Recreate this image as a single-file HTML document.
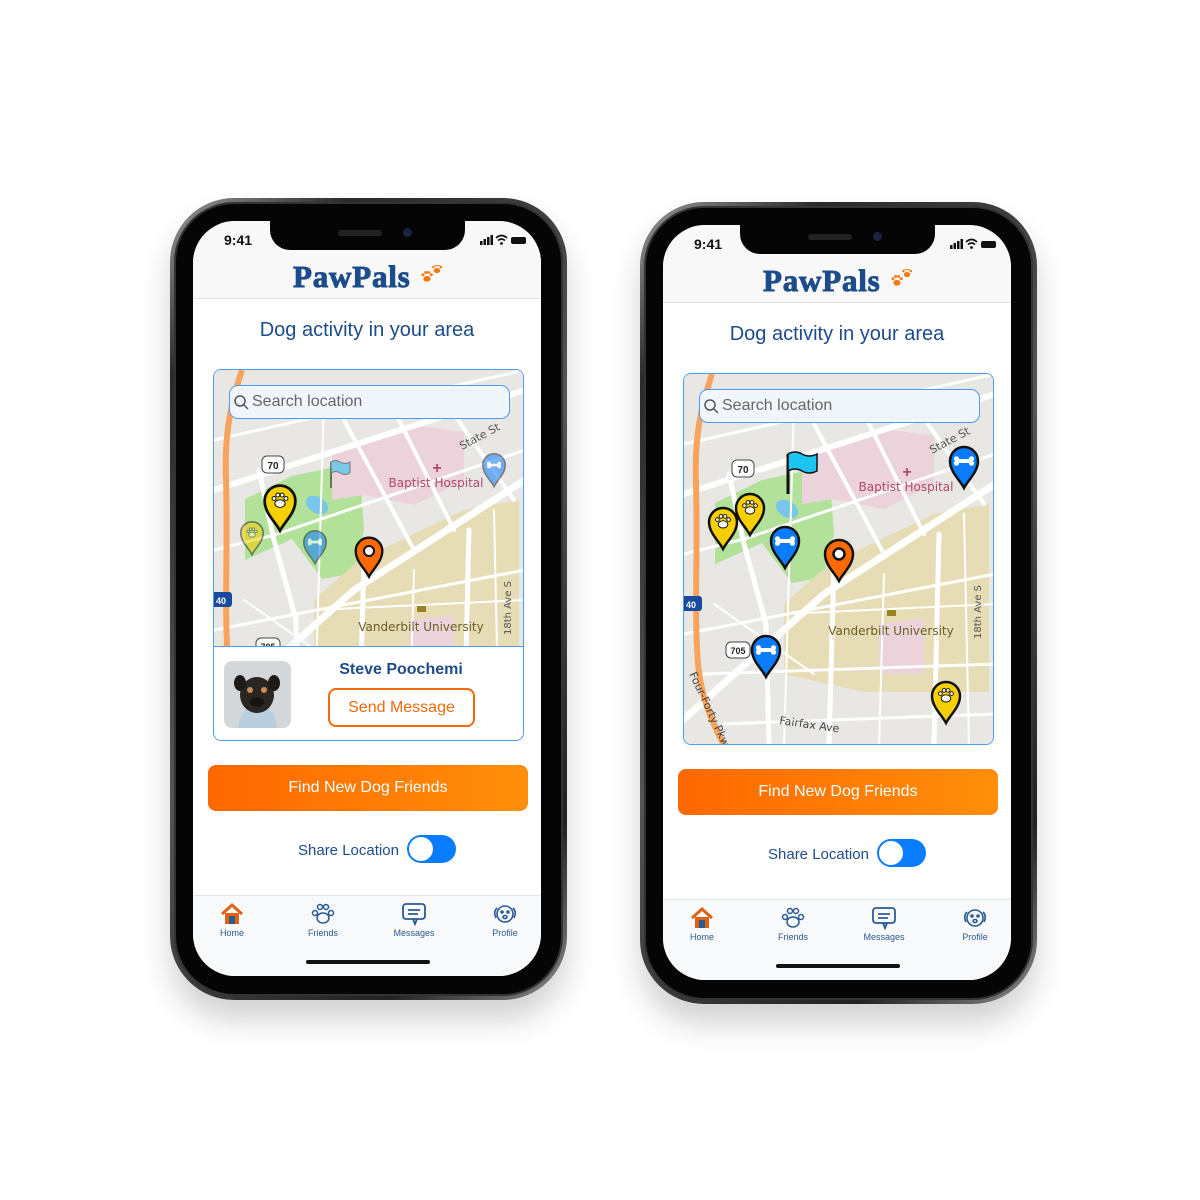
<!DOCTYPE html>
<html><head><meta charset="utf-8"><style>
*{margin:0;padding:0;box-sizing:border-box}
body{width:1200px;height:1200px;background:#fff;position:relative;overflow:hidden;font-family:"Liberation Sans",sans-serif}
.phone{position:absolute;width:397px;height:802px;border-radius:64px;background:linear-gradient(135deg,#9a9a9a,#2a2a2a 15%,#555 50%,#222 85%,#8a8a8a);box-shadow:0 20px 30px rgba(0,0,0,.18);padding:4px}
.phone .inner{width:100%;height:100%;border-radius:60px;background:#050505;position:relative;border:2px solid #333}
.screen{position:absolute;left:17px;top:17px;width:348px;height:755px;border-radius:42px;background:#fff;overflow:hidden}
.notch{position:absolute;left:77px;top:0;width:195px;height:29px;background:#050505;border-radius:0 0 20px 20px}
.notch:before{content:"";position:absolute;left:68px;top:9px;width:44px;height:6px;border-radius:3px;background:#222}
.notch:after{content:"";position:absolute;left:133px;top:7px;width:9px;height:9px;border-radius:50%;background:#1a2540}
.time{position:absolute;left:31px;top:11px;font-size:14px;color:#111;font-weight:bold}
.stat{position:absolute;right:13px;top:13px}
.header{position:absolute;left:0;top:0;width:348px;height:78px;background:#f8f8f8;border-bottom:1px solid #e2e2e2}
.logo{position:absolute;left:100px;top:38px;font-family:"Liberation Serif",serif;font-weight:bold;font-size:31px;color:#1d4c8a;letter-spacing:.8px;-webkit-text-stroke:.9px #1d4c8a}
.paws{position:absolute;left:227px;top:44px}
.title{position:absolute;top:98px;width:100%;text-align:center;font-size:20px;color:#1d4c8a}
.mapbox{position:absolute;left:20px;top:148px;width:311px;height:372px;border:1px solid #4a9cf5;border-radius:8px;overflow:hidden;background:#fff}
.map{position:absolute;left:0;top:0;width:311px;height:372px}
.search{position:absolute;left:15px;top:15px;width:281px;height:34px;border:1px solid #4a9cf5;border-radius:9px;background:#f1f6fd;font-size:16px;color:#666;padding:7px 0 0 22px}
.btn{position:absolute;left:15px;top:544px;width:320px;height:46px;border-radius:8px;background:linear-gradient(90deg,#ff6800,#ff8f0a);color:#fff;font-size:16px;text-align:center;line-height:46px}
.share{position:absolute;top:616px;left:105px;font-size:15px;color:#1d4c8a;line-height:28px}
.tog{position:absolute;top:614px;left:214px;width:49px;height:28px;border-radius:14px;background:#0a7cff}
.tog:after{content:"";position:absolute;left:2px;top:2px;width:24px;height:24px;border-radius:50%;background:#fff}
.nav{position:absolute;left:0;top:674px;width:348px;height:81px;background:#f8f9fa;border-top:1px solid #e4e4e4}
.nav div{position:absolute;top:6px;width:80px;text-align:center;font-size:9px;color:#2a5a94}
.nav svg{display:block;margin:0 auto 2px}
.hbar{position:absolute;left:113px;top:739px;width:124px;height:4px;border-radius:2px;background:#111}
</style></head><body>

<svg width="0" height="0" style="position:absolute">
<defs>
<path id="pin" d="M0,27 C-4,19 -14,11 -14,0 A14,14 0 1,1 14,0 C14,11 4,19 0,27Z"/>
<g id="paw"><ellipse cx="0" cy="3" rx="6" ry="4.5" fill="#fff" stroke="#111" stroke-width="1.2"/><circle cx="-7" cy="-3" r="2.3" fill="#fff" stroke="#111" stroke-width="1.2"/><circle cx="-2.5" cy="-7" r="2.3" fill="#fff" stroke="#111" stroke-width="1.2"/><circle cx="2.5" cy="-7" r="2.3" fill="#fff" stroke="#111" stroke-width="1.2"/><circle cx="7" cy="-3" r="2.3" fill="#fff" stroke="#111" stroke-width="1.2"/></g>
<g id="bone"><rect x="-7" y="-2" width="14" height="4" fill="#fff"/><circle cx="-7.5" cy="-2.2" r="2.6" fill="#fff"/><circle cx="-7.5" cy="2.2" r="2.6" fill="#fff"/><circle cx="7.5" cy="-2.2" r="2.6" fill="#fff"/><circle cx="7.5" cy="2.2" r="2.6" fill="#fff"/></g>
<g id="opaw"><ellipse cx="0" cy="2" rx="4" ry="3.2"/><circle cx="-4.5" cy="-2.5" r="1.6"/><circle cx="-1.5" cy="-5" r="1.6"/><circle cx="1.8" cy="-5" r="1.6"/><circle cx="4.8" cy="-2.5" r="1.6"/></g>
<g id="base">
<rect width="311" height="372" fill="#e9e7e3"/>
<polygon points="31,129 78,106 145,92 150,160 141,203 108,209 78,169 31,190" fill="#b2e19a"/>
<polygon points="118,83 200,55 250,62 250,110 200,135 150,125 118,130" fill="#ecd2da"/>
<polygon points="145,190 250,140 305,130 305,318 180,318 100,300 100,230" fill="#e6dcb5"/>
<polygon points="195,250 240,245 240,300 195,300" fill="#ecd2da"/>
<ellipse cx="103" cy="135" rx="12" ry="8" fill="#79c6ec" transform="rotate(30 103 135)"/>
<g stroke="#fff" fill="none" stroke-linecap="round">
<path d="M0,120 L311,20" stroke-width="6"/>
<path d="M0,345 L140,220 L311,110" stroke-width="7"/>
<path d="M45,100 L60,170 L82,250 L85,372" stroke-width="5"/>
<path d="M150,190 L145,372" stroke-width="5"/>
<path d="M255,160 L250,372" stroke-width="5"/>
<path d="M130,50 L200,180" stroke-width="4"/>
<path d="M180,40 L240,160" stroke-width="4"/>
<path d="M230,30 L300,130" stroke-width="4"/>
<path d="M0,70 L311,0" stroke-width="3"/>
<path d="M0,180 L60,165 L311,80" stroke-width="3"/>
<path d="M0,260 L311,200" stroke-width="3"/>
<path d="M20,300 L311,290" stroke-width="3"/>
<path d="M40,350 L311,340" stroke-width="3"/>
<path d="M110,30 L100,372" stroke-width="2"/>
<path d="M200,200 L195,372" stroke-width="2"/>
<path d="M280,140 L285,372" stroke-width="2"/>
<path d="M30,230 L130,300" stroke-width="2"/>
<path d="M100,240 L311,230" stroke-width="2"/>
</g>
<path d="M28,0 C18,30 10,60 12,110 C14,180 10,240 14,290 C18,330 30,350 40,372" stroke="#f9a35c" stroke-width="6" fill="none"/>
<text x="240" y="72" font-size="11" fill="#555" transform="rotate(-28 260 60)" font-family="DejaVu Sans">State St</text>
<text x="222" y="117" font-size="12" fill="#b14a6e" text-anchor="middle" font-family="DejaVu Sans">Baptist Hospital</text>
<text x="223" y="103" font-size="16" fill="#b14a6e" text-anchor="middle" font-weight="bold">+</text>
<text x="207" y="261" font-size="12" fill="#6c5e25" text-anchor="middle" font-family="DejaVu Sans">Vanderbilt University</text>
<rect x="203" y="236" width="9" height="6" fill="#9a8420"/>
<text x="0" y="0" font-size="10" fill="#555" font-family="DejaVu Sans" transform="translate(297,265) rotate(-90)">18th Ave S</text>
<text x="95" y="350" font-size="11" fill="#444" font-family="DejaVu Sans" transform="rotate(8 95 350)">Fairfax Ave</text>
<text x="0" y="0" font-size="11" fill="#444" font-family="DejaVu Sans" transform="translate(5,300) rotate(65)">Four-Forty Pkwy</text>
<rect x="48" y="86" width="22" height="17" rx="5" fill="#fff" stroke="#444"/><text x="59" y="99" font-size="10" text-anchor="middle" font-weight="bold" fill="#222">70</text>
<rect x="42" y="268" width="24" height="16" rx="5" fill="#fff" stroke="#444"/><text x="54" y="280" font-size="9" text-anchor="middle" font-weight="bold" fill="#222">705</text>
<rect x="-4" y="222" width="22" height="15" rx="3" fill="#1a4a9e"/><text x="7" y="234" font-size="9" text-anchor="middle" font-weight="bold" fill="#fff">40</text>
</g>
<g id="stat"><rect x="0" y="7" width="2.5" height="4" fill="#111"/><rect x="3.5" y="5" width="2.5" height="6" fill="#111"/><rect x="7" y="3" width="2.5" height="8" fill="#111"/><rect x="10.5" y="1" width="2.5" height="10" fill="#111"/><path d="M16,4 Q21.5,-1 27,4 M18,6.5 Q21.5,3.5 25,6.5" stroke="#111" stroke-width="1.6" fill="none"/><circle cx="21.5" cy="9.5" r="1.4" fill="#111"/><rect x="31" y="3" width="15" height="7" rx="2" fill="#111"/></g>
<g id="logopaws" fill="#f27a10"><use href="#opaw" transform="translate(7,12) scale(.9)"/><use href="#opaw" transform="translate(17,4) scale(.8)"/></g>
</defs></svg>

<!-- LEFT PHONE -->
<div class="phone" style="left:170px;top:198px"><div class="inner"><div class="screen">
<div class="header"></div>
<div class="logo">PawPals</div>
<svg class="paws" width="26" height="20"><use href="#logopaws"/></svg>
<div class="notch"></div>
<div class="time">9:41</div>
<svg class="stat" width="48" height="12"><use href="#stat"/></svg>
<div class="title">Dog activity in your area</div>
<div class="mapbox">
<svg class="map" viewBox="0 0 311 276" style="height:276px"><use href="#base"/>
<g opacity=".55"><g transform="translate(38,163)"><use href="#pin" fill="#f5cf00" stroke="#222" stroke-width="2" transform="scale(.8)"/><use href="#paw" transform="scale(.55)"/></g>
<g transform="translate(101,172)"><use href="#pin" fill="#0a7cff" stroke="#222" stroke-width="2" transform="scale(.8)"/><use href="#bone" transform="scale(.7)"/></g>
<g transform="translate(280,95)"><use href="#pin" fill="#0a7cff" stroke="#222" stroke-width="2" transform="scale(.8)"/><use href="#bone" transform="scale(.7)"/></g>
<g transform="translate(117,100)"><path d="M0,18 V-8" stroke="#222" stroke-width="2"/><path d="M0,-8 Q5,-11 9,-8 Q14,-5 19,-8 V3 Q14,6 9,3 Q5,0 0,3Z" fill="#1cc4f0" stroke="#222"/></g></g>
<g transform="translate(66,131)"><use href="#pin" fill="#f5cf00" stroke="#111" stroke-width="2.5" transform="scale(1.1)"/><use href="#paw" transform="scale(.85)"/></g>
<g transform="translate(155,181)"><use href="#pin" fill="#ff6a00" stroke="#111" stroke-width="2.5" transform="scale(.95)"/><circle r="5" fill="#fff" stroke="#111" stroke-width="2"/></g>
</svg>
<div class="search"><svg style="position:absolute;left:4px;top:9px" width="15" height="15"><circle cx="6" cy="6" r="5" stroke="#555" stroke-width="1.5" fill="none"/><path d="M10,10 L14,14" stroke="#555" stroke-width="1.5"/></svg>Search location</div>
<div style="position:absolute;left:0;top:276px;width:311px;height:96px;border-top:1px solid #4a9cf5;background:#fff">
<svg style="position:absolute;left:10px;top:14px" width="67" height="67"><rect width="67" height="67" rx="8" fill="#d4d7da"/><path d="M14,67 Q16,50 26,46 L41,46 Q51,50 53,67Z" fill="#b9cfe0"/><ellipse cx="33" cy="34" rx="17" ry="18" fill="#2b2622"/><ellipse cx="16" cy="22" rx="6" ry="8" fill="#1e1a17"/><ellipse cx="50" cy="22" rx="6" ry="8" fill="#1e1a17"/><circle cx="26" cy="29" r="3" fill="#c98c5a"/><circle cx="40" cy="29" r="3" fill="#c98c5a"/><ellipse cx="33" cy="41" rx="7" ry="5" fill="#161311"/></svg>
<div style="position:absolute;left:100px;top:14px;width:174px;text-align:center;font-size:16px;font-weight:bold;color:#1d4c8a">Steve Poochemi</div>
<div style="position:absolute;left:114px;top:41px;width:147px;height:39px;border:2px solid #f26a0c;border-radius:8px;text-align:center;line-height:35px;color:#f26a0c;font-size:16px">Send Message</div>
</div>
</div>
<div class="btn">Find New Dog Friends</div>
<div class="share">Share Location</div><div class="tog"></div>
<div class="nav">
<div style="left:-1px"><svg width="26" height="24"><path d="M3,12 L13,3 L23,12" stroke="#e0620e" stroke-width="3" fill="none"/><rect x="6" y="11" width="14" height="11" fill="#e0620e"/><rect x="10" y="14" width="6" height="8" fill="#2a5a94"/></svg>Home</div>
<div style="left:90px"><svg width="26" height="24" fill="none" stroke="#2a5a94" stroke-width="1.5"><ellipse cx="13" cy="16" rx="6" ry="5"/><circle cx="5" cy="11" r="2.5"/><circle cx="10" cy="5" r="2.5"/><circle cx="16" cy="5" r="2.5"/><circle cx="21" cy="11" r="2.5"/></svg>Friends</div>
<div style="left:181px"><svg width="26" height="24" fill="none" stroke="#2a5a94" stroke-width="1.8"><rect x="2" y="2" width="22" height="15" rx="3"/><path d="M7,8 H19 M7,12 H17 M12,17 L14,22 L16,17"/></svg>Messages</div>
<div style="left:272px"><svg width="26" height="24" fill="none" stroke="#2a5a94" stroke-width="1.6"><circle cx="13" cy="12" r="8"/><path d="M5,6 Q1,10 4,16 M21,6 Q25,10 22,16"/><circle cx="10" cy="10" r="1" fill="#2a5a94"/><circle cx="16" cy="10" r="1" fill="#2a5a94"/><ellipse cx="13" cy="15" rx="2" ry="1.5"/></svg>Profile</div>
</div>
<div class="hbar"></div>
</div></div></div>

<!-- RIGHT PHONE -->
<div class="phone" style="left:640px;top:202px"><div class="inner"><div class="screen">
<div class="header"></div>
<div class="logo">PawPals</div>
<svg class="paws" width="26" height="20"><use href="#logopaws"/></svg>
<div class="notch"></div>
<div class="time">9:41</div>
<svg class="stat" width="48" height="12"><use href="#stat"/></svg>
<div class="title">Dog activity in your area</div>
<div class="mapbox">
<svg class="map" viewBox="0 0 311 372"><use href="#base"/>
<g transform="translate(104,80)"><path d="M0,40 V0" stroke="#111" stroke-width="3"/><path d="M0,0 Q7,-4 14,0 Q21,4 29,0 V17 Q21,21 14,17 Q7,13 0,17Z" fill="#1cc4f0" stroke="#111" stroke-width="1.5"/></g>
<g transform="translate(39,148)"><use href="#pin" fill="#f5cf00" stroke="#111" stroke-width="2.5"/><use href="#paw" transform="scale(.8)"/></g>
<g transform="translate(66,134)"><use href="#pin" fill="#f5cf00" stroke="#111" stroke-width="2.5"/><use href="#paw" transform="scale(.8)"/></g>
<g transform="translate(101,167)"><use href="#pin" fill="#0a7cff" stroke="#111" stroke-width="2.5"/><use href="#bone"/></g>
<g transform="translate(155,180)"><use href="#pin" fill="#ff6a00" stroke="#111" stroke-width="2.5"/><circle r="5.5" fill="#fff" stroke="#111" stroke-width="2.5"/></g>
<g transform="translate(280,87)"><use href="#pin" fill="#0a7cff" stroke="#111" stroke-width="2.5"/><use href="#bone"/></g>
<g transform="translate(82,276)"><use href="#pin" fill="#0a7cff" stroke="#111" stroke-width="2.5"/><use href="#bone"/></g>
<g transform="translate(262,322)"><use href="#pin" fill="#f5cf00" stroke="#111" stroke-width="2.5"/><use href="#paw" transform="scale(.8)"/></g>
</svg>
<div class="search"><svg style="position:absolute;left:4px;top:9px" width="15" height="15"><circle cx="6" cy="6" r="5" stroke="#555" stroke-width="1.5" fill="none"/><path d="M10,10 L14,14" stroke="#555" stroke-width="1.5"/></svg>Search location</div>
</div>
<div class="btn">Find New Dog Friends</div>
<div class="share">Share Location</div><div class="tog"></div>
<div class="nav">
<div style="left:-1px"><svg width="26" height="24"><path d="M3,12 L13,3 L23,12" stroke="#e0620e" stroke-width="3" fill="none"/><rect x="6" y="11" width="14" height="11" fill="#e0620e"/><rect x="10" y="14" width="6" height="8" fill="#2a5a94"/></svg>Home</div>
<div style="left:90px"><svg width="26" height="24" fill="none" stroke="#2a5a94" stroke-width="1.5"><ellipse cx="13" cy="16" rx="6" ry="5"/><circle cx="5" cy="11" r="2.5"/><circle cx="10" cy="5" r="2.5"/><circle cx="16" cy="5" r="2.5"/><circle cx="21" cy="11" r="2.5"/></svg>Friends</div>
<div style="left:181px"><svg width="26" height="24" fill="none" stroke="#2a5a94" stroke-width="1.8"><rect x="2" y="2" width="22" height="15" rx="3"/><path d="M7,8 H19 M7,12 H17 M12,17 L14,22 L16,17"/></svg>Messages</div>
<div style="left:272px"><svg width="26" height="24" fill="none" stroke="#2a5a94" stroke-width="1.6"><circle cx="13" cy="12" r="8"/><path d="M5,6 Q1,10 4,16 M21,6 Q25,10 22,16"/><circle cx="10" cy="10" r="1" fill="#2a5a94"/><circle cx="16" cy="10" r="1" fill="#2a5a94"/><ellipse cx="13" cy="15" rx="2" ry="1.5"/></svg>Profile</div>
</div>
<div class="hbar"></div>
</div></div></div>
</body></html>
